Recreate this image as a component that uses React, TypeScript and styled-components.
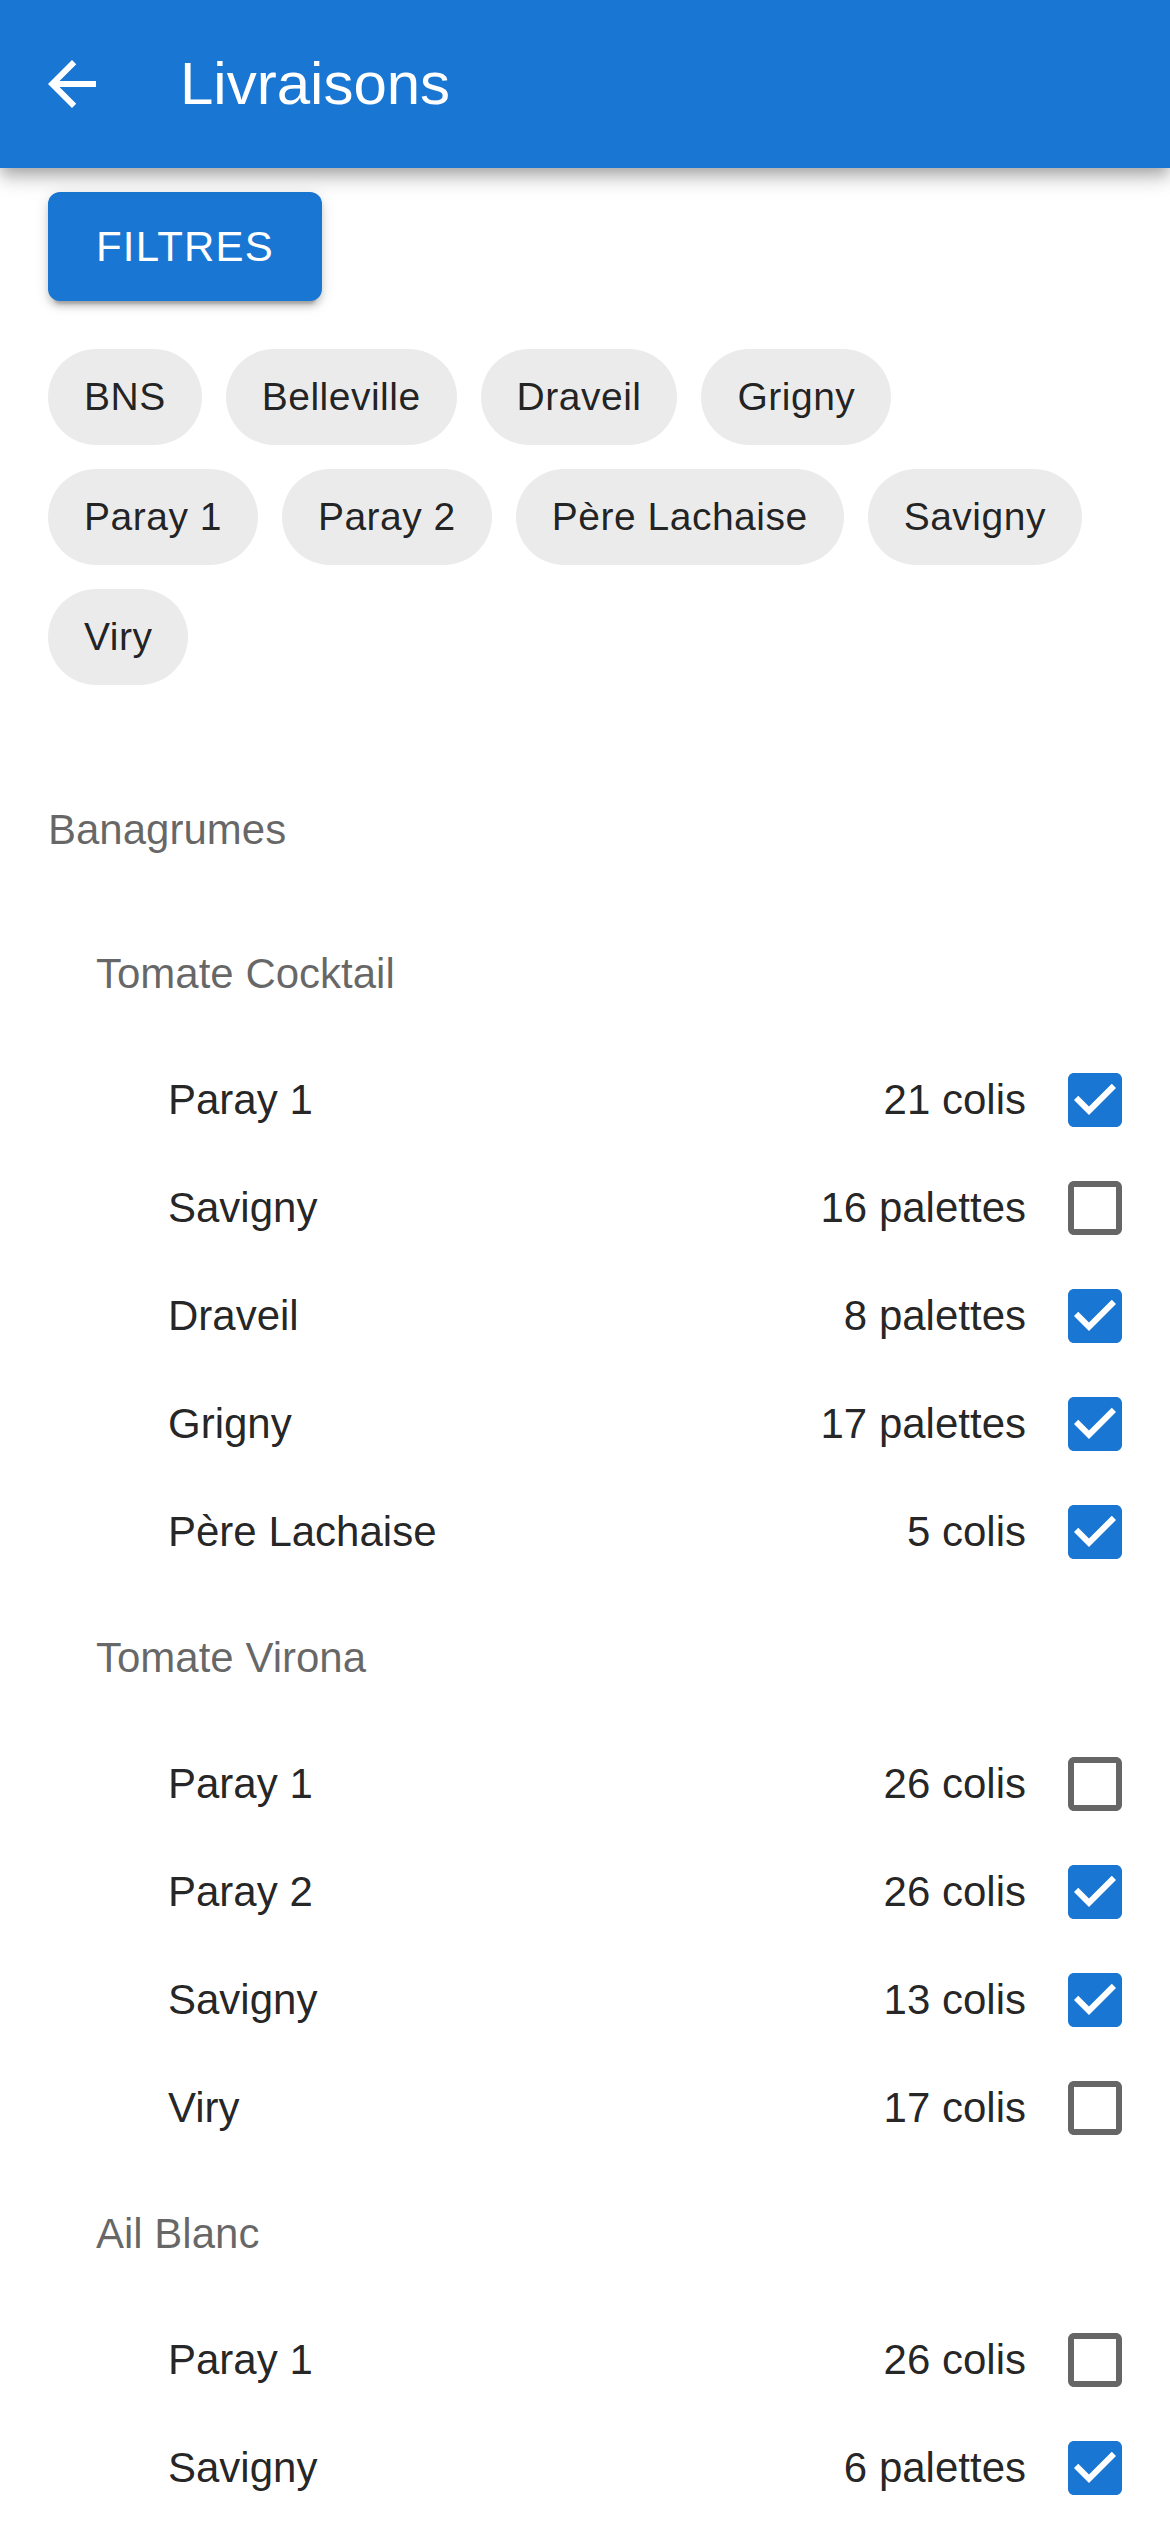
import * as React from 'react'
import styled, {createGlobalStyle} from 'styled-components'

const GlobalStyle = createGlobalStyle`
  html, body {
    margin: 0;
    padding: 0;
    background: #fff;
    font-family: "Liberation Sans", Arial, Helvetica, sans-serif;
  }
`

// App bar
const AppBar = styled.header`
  height: 168px;
  display: flex;
  align-items: center;
  padding-left: 36px;
  background-color: #1976d2;
  color: #fff;
  box-shadow: 0 6px 12px -3px rgba(0, 0, 0, 0.2), 0 12px 15px 0 rgba(0, 0, 0, 0.14),
    0 3px 30px 0 rgba(0, 0, 0, 0.12);
  position: relative;
  z-index: 1;
`

const BackIcon = styled.svg`
  width: 72px;
  height: 72px;
  fill: #fff;
  flex-shrink: 0;
`

const Title = styled.h1`
  margin: 0 0 0 72px;
  font-size: 60px;
  font-weight: 400;
  line-height: 1;
`

// Filters
const Content = styled.main`
  padding: 24px 64px 0 48px;
`

const FilterButton = styled.button`
  height: 109px;
  padding: 0 48px;
  border: none;
  border-radius: 12px;
  background-color: #1976d2;
  color: #fff;
  font-family: inherit;
  font-size: 42px;
  font-weight: 400;
  letter-spacing: 0.02857em;
  text-transform: uppercase;
  box-shadow: 0 9px 3px -6px rgba(0, 0, 0, 0.2), 0 6px 6px 0 rgba(0, 0, 0, 0.14),
    0 3px 15px 0 rgba(0, 0, 0, 0.12);
`

const Chips = styled.div`
  display: flex;
  flex-wrap: wrap;
  gap: 24px;
  margin-top: 48px;
`

const Chip = styled.span`
  height: 96px;
  display: inline-flex;
  align-items: center;
  padding: 0 36px;
  border-radius: 48px;
  background-color: #ebebeb;
  color: rgba(0, 0, 0, 0.87);
  font-size: 39px;
  letter-spacing: 0.5px;
  white-space: nowrap;
`

// Delivery list
const List = styled.section`
  margin-top: 73px;
`

const Subheader = styled.div<{$level: number}>`
  padding-left: ${({$level}) => 48 + $level * 48}px;
  line-height: 144px;
  font-size: 42px;
  color: rgba(0, 0, 0, 0.6);
`

const Row = styled.div`
  height: 108px;
  display: flex;
  align-items: center;
  padding: 0 39px 0 168px;
  font-size: 42px;
  color: rgba(0, 0, 0, 0.87);
`

const Place = styled.span`
  flex: 1;
`

const Quantity = styled.span`
  margin-right: 33px;
`

const CheckIcon = styled.svg<{$checked: boolean}>`
  width: 72px;
  height: 72px;
  flex-shrink: 0;
  fill: ${({$checked}) => ($checked ? '#1976d2' : 'rgba(0, 0, 0, 0.6)')};
`

function Check({checked}: {checked: boolean}) {
  return (
    <CheckIcon $checked={checked} viewBox="0 0 24 24">
      {checked ? (
        <path d="M19 3H5c-1.11 0-2 .9-2 2v14c0 1.1.89 2 2 2h14c1.11 0 2-.9 2-2V5c0-1.1-.89-2-2-2zm-9 14l-5-5 1.41-1.41L10 14.17l7.59-7.59L19 8l-9 9z" />
      ) : (
        <path d="M19 5v14H5V5h14m0-2H5c-1.1 0-2 .9-2 2v14c0 1.1.9 2 2 2h14c1.1 0 2-.9 2-2V5c0-1.1-.9-2-2-2z" />
      )}
    </CheckIcon>
  )
}

interface Delivery {
  place: string
  quantity: string
  done: boolean
}

interface Product {
  name: string
  deliveries: Delivery[]
}

const sites = [
  'BNS',
  'Belleville',
  'Draveil',
  'Grigny',
  'Paray 1',
  'Paray 2',
  'Père Lachaise',
  'Savigny',
  'Viry',
]

const products: Product[] = [
  {
    name: 'Tomate Cocktail',
    deliveries: [
      {place: 'Paray 1', quantity: '21 colis', done: true},
      {place: 'Savigny', quantity: '16 palettes', done: false},
      {place: 'Draveil', quantity: '8 palettes', done: true},
      {place: 'Grigny', quantity: '17 palettes', done: true},
      {place: 'Père Lachaise', quantity: '5 colis', done: true},
    ],
  },
  {
    name: 'Tomate Virona',
    deliveries: [
      {place: 'Paray 1', quantity: '26 colis', done: false},
      {place: 'Paray 2', quantity: '26 colis', done: true},
      {place: 'Savigny', quantity: '13 colis', done: true},
      {place: 'Viry', quantity: '17 colis', done: false},
    ],
  },
  {
    name: 'Ail Blanc',
    deliveries: [
      {place: 'Paray 1', quantity: '26 colis', done: false},
      {place: 'Savigny', quantity: '6 palettes', done: true},
    ],
  },
]

export default function App() {
  return (
    <>
      <GlobalStyle />
      <AppBar>
        <BackIcon viewBox="0 0 24 24">
          <path d="M20 11H7.83l5.59-5.59L12 4l-8 8 8 8 1.41-1.41L7.83 13H20v-2z" />
        </BackIcon>
        <Title>Livraisons</Title>
      </AppBar>
      <Content>
        <FilterButton>Filtres</FilterButton>
        <Chips>
          {sites.map((site) => (
            <Chip key={site}>{site}</Chip>
          ))}
        </Chips>
      </Content>
      <List>
        <Subheader $level={0}>Banagrumes</Subheader>
        {products.map((product) => (
          <div key={product.name}>
            <Subheader $level={1}>{product.name}</Subheader>
            {product.deliveries.map((d) => (
              <Row key={d.place}>
                <Place>{d.place}</Place>
                <Quantity>{d.quantity}</Quantity>
                <Check checked={d.done} />
              </Row>
            ))}
          </div>
        ))}
      </List>
    </>
  )
}
